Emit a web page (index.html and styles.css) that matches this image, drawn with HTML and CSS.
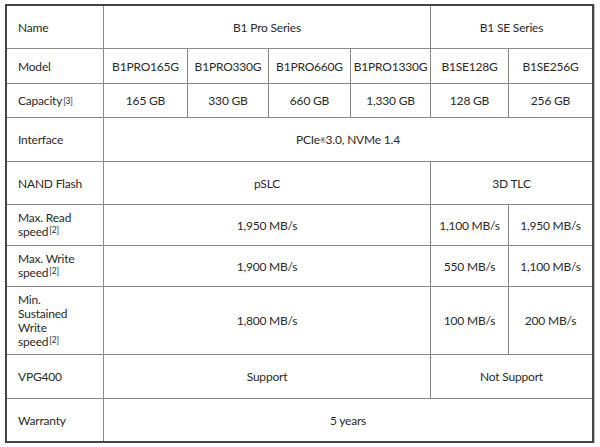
FILE: index.html
```html
<!DOCTYPE html>
<html>
<head>
<meta charset="utf-8">
<link rel="stylesheet" href="styles.css">
</head>
<body>
<div class="spec">
  <div class="cell label">Name</div>
  <div class="cell span4">B1 Pro Series</div>
  <div class="cell span2">B1 SE Series</div>

  <div class="cell label">Model</div>
  <div class="cell">B1PRO165G</div>
  <div class="cell">B1PRO330G</div>
  <div class="cell">B1PRO660G</div>
  <div class="cell">B1PRO1330G</div>
  <div class="cell">B1SE128G</div>
  <div class="cell">B1SE256G</div>

  <div class="cell label">Capacity<sup>[3]</sup></div>
  <div class="cell">165 GB</div>
  <div class="cell">330 GB</div>
  <div class="cell">660 GB</div>
  <div class="cell">1,330 GB</div>
  <div class="cell">128 GB</div>
  <div class="cell">256 GB</div>

  <div class="cell label">Interface</div>
  <div class="cell span6">PCIe<sup class="reg">®</sup>3.0, NVMe 1.4</div>

  <div class="cell label">NAND Flash</div>
  <div class="cell span4">pSLC</div>
  <div class="cell span2">3D TLC</div>

  <div class="cell label multi"><span class="line">Max. Read</span><span class="line">speed<sup>[2]</sup></span></div>
  <div class="cell span4">1,950 MB/s</div>
  <div class="cell">1,100 MB/s</div>
  <div class="cell">1,950 MB/s</div>

  <div class="cell label multi"><span class="line">Max. Write</span><span class="line">speed<sup>[2]</sup></span></div>
  <div class="cell span4">1,900 MB/s</div>
  <div class="cell">550 MB/s</div>
  <div class="cell">1,100 MB/s</div>

  <div class="cell label multi"><span class="line">Min.</span><span class="line">Sustained</span><span class="line">Write</span><span class="line">speed<sup>[2]</sup></span></div>
  <div class="cell span4">1,800 MB/s</div>
  <div class="cell">100 MB/s</div>
  <div class="cell">200 MB/s</div>

  <div class="cell label">VPG400</div>
  <div class="cell span4">Support</div>
  <div class="cell span2">Not Support</div>

  <div class="cell label">Warranty</div>
  <div class="cell span6">5 years</div>
</div>
</body>
</html>
```
FILE: styles.css
```css
html, body {
  margin: 0;
  padding: 0;
  background: #ffffff;
}

body {
  padding: 4px 0 0 5px;
  font-family: Lato, "Noto Sans", sans-serif;
  font-size: 12px;
  letter-spacing: -0.2px;
  color: #2a2a2a;
}

.spec {
  width: 585px;
  border: 2px solid #444444;
  box-shadow: 1px 0 0 #c4c4c4;
  display: grid;
  grid-template-columns: 96px 83px 80px 81px 79px 77px 83px;
  grid-template-rows: 42px 34px 33px 43px 42px 40px 40px 67px 43px 42px;
  gap: 1px;
  background: #8a8a8a;
}

.cell {
  background: #ffffff;
  display: flex;
  align-items: center;
  justify-content: center;
  text-align: center;
  white-space: nowrap;
}

.label {
  justify-content: flex-start;
  text-align: left;
  padding-left: 11px;
}

.multi {
  flex-direction: column;
  align-items: flex-start;
  justify-content: center;
  line-height: 14px;
}

.line {
  display: block;
  height: 14px;
}

.span2 { grid-column: span 2; }
.span4 { grid-column: span 4; }
.span6 { grid-column: span 6; }

sup {
  font-size: 8.5px;
  line-height: 0;
  vertical-align: 3px;
  margin-left: 1px;
}

sup.reg {
  font-size: 7px;
  vertical-align: 4px;
  margin-left: 0;
}
```
